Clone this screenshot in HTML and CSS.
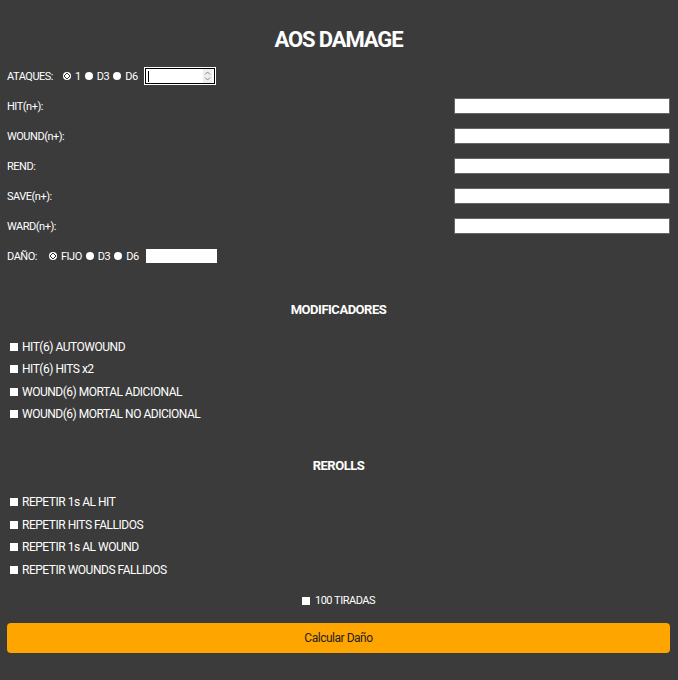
FILE: index.html
```html
<!DOCTYPE html>
<html lang="es">
<head>
<meta charset="utf-8">
<title>AOS DAMAGE</title>
<link rel="stylesheet" href="styles.css">
</head>
<body>
<main class="page">
  <h1 class="title">AOS DAMAGE</h1>

  <div class="row">
    <span class="label">ATAQUES:</span>
    <span class="radios">
      <span class="radio checked"></span><span class="rlabel">1</span>
      <span class="radio"></span><span class="rlabel">D3</span>
      <span class="radio"></span><span class="rlabel">D6</span>
      <span class="number">
        <span class="caret"></span>
        <span class="spin">
          <svg width="7" height="12" viewBox="0 0 7 12"><path d="M1 4.5 L3.5 2 L6 4.5 M1 7.5 L3.5 10 L6 7.5" fill="none" stroke="#8a8a8a" stroke-width="1"/></svg>
        </span>
      </span>
    </span>
  </div>

  <div class="row field"><span class="label">HIT(n+):</span><span class="input"></span></div>
  <div class="row field"><span class="label">WOUND(n+):</span><span class="input"></span></div>
  <div class="row field"><span class="label">REND:</span><span class="input"></span></div>
  <div class="row field"><span class="label">SAVE(n+):</span><span class="input"></span></div>
  <div class="row field"><span class="label">WARD(n+):</span><span class="input"></span></div>

  <div class="row">
    <span class="label">DAÑO:</span>
    <span class="radios dano">
      <span class="radio checked"></span><span class="rlabel">FIJO</span>
      <span class="radio"></span><span class="rlabel">D3</span>
      <span class="radio"></span><span class="rlabel">D6</span>
      <span class="small-input"></span>
    </span>
  </div>

  <h2 class="section">MODIFICADORES</h2>
  <ul class="checks">
    <li><span class="box"></span>HIT(6) AUTOWOUND</li>
    <li><span class="box"></span>HIT(6) HITS x2</li>
    <li><span class="box"></span>WOUND(6) MORTAL ADICIONAL</li>
    <li><span class="box"></span>WOUND(6) MORTAL NO ADICIONAL</li>
  </ul>

  <h2 class="section rerolls">REROLLS</h2>
  <ul class="checks">
    <li><span class="box"></span>REPETIR 1s AL HIT</li>
    <li><span class="box"></span>REPETIR HITS FALLIDOS</li>
    <li><span class="box"></span>REPETIR 1s AL WOUND</li>
    <li><span class="box"></span>REPETIR WOUNDS FALLIDOS</li>
  </ul>

  <div class="tiradas"><span class="box"></span>100 TIRADAS</div>

  <button class="calc" type="button">Calcular Daño</button>
</main>
</body>
</html>
```

FILE: styles.css
```css
html, body {
  margin: 0;
  padding: 0;
  background: #3b3b3b;
}
body {
  font-family: Roboto, "Liberation Sans", sans-serif;
  color: #ffffff;
  font-size: 12px;
  letter-spacing: -0.04em;
}
.page {
  padding: 0 8px 0 7px;
  display: flex;
  flex-direction: column;
}
.title {
  margin: 27px 0 8px;
  text-align: center;
  font-size: 22px;
  font-weight: 700;
  line-height: 26px;
  letter-spacing: -0.05em;
}
.row {
  display: flex;
  align-items: center;
  justify-content: space-between;
  height: 30px;
}
.row:not(.field) {
  justify-content: flex-start;
}
.label {
  font-size: 11px;
}
.radios {
  display: flex;
  align-items: center;
  margin-left: 6px;
}
.radios.dano { margin-left: 8px; }
.radio {
  width: 8px;
  height: 8px;
  border-radius: 50%;
  background: #fff;
  margin: 0 4px 0 4px;
  flex: none;
}
.radio.checked {
  background: radial-gradient(circle at 50% 50%, #fff 0, #fff 1.6px, #333 1.9px, #333 2.6px, #fff 2.9px);
}
.rlabel {
  font-size: 11px;
}
.number {
  margin-left: 7px;
  width: 70px;
  height: 16px;
  box-sizing: border-box;
  background: #fff;
  border: 1px solid #000;
  outline: 1px solid #fff;
  display: flex;
  align-items: center;
  justify-content: space-between;
}
.caret {
  width: 1px;
  height: 11px;
  background: #000;
  margin-left: 2px;
}
.spin {
  width: 9px;
  height: 14px;
  background: #eeeeee;
  margin-right: 2px;
  display: flex;
  align-items: center;
  justify-content: center;
}
.input {
  width: 214px;
  height: 14px;
  background: #fff;
  border: 1px solid #666;
}
.small-input {
  margin-left: 7px;
  width: 71px;
  height: 14px;
  background: #fff;
}
.section {
  margin: 30px 0 19px;
  text-align: center;
  font-size: 13px;
  font-weight: 700;
  line-height: 18px;
}
.section.rerolls {
  margin-top: 34px;
}
.checks {
  list-style: none;
  margin: 0;
  padding: 0 0 0 3px;
  display: flex;
  flex-direction: column;
  gap: 5.6px;
}
.checks li {
  display: flex;
  align-items: center;
  height: 17px;
  font-size: 12px;
}
.box {
  width: 8px;
  height: 8px;
  background: #fff;
  margin-right: 4px;
  flex: none;
}
.tiradas {
  margin-top: 15px;
  display: flex;
  justify-content: center;
  align-items: center;
  font-size: 11px;
  height: 14px;
}
.tiradas .box { margin-right: 5px; }
.calc {
  margin-top: 15px;
  height: 30px;
  background: #ffa500;
  border: none;
  border-radius: 4px;
  color: #222;
  font-family: Roboto, "Liberation Sans", sans-serif;
  font-size: 12px;
  letter-spacing: -0.04em;
}
```
